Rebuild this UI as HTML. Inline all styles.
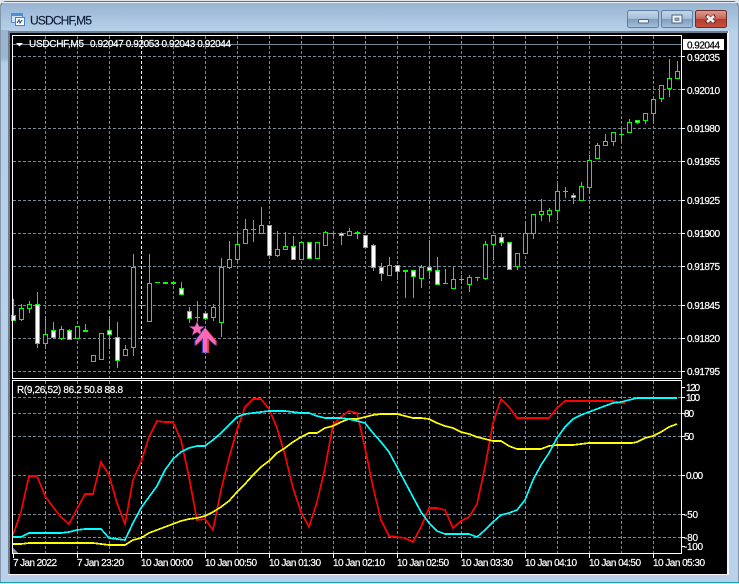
<!DOCTYPE html>
<html><head><meta charset="utf-8"><title>USDCHF,M5</title>
<style>
html,body{margin:0;padding:0;width:739px;height:584px;overflow:hidden;background:#dfe6ee}
svg{display:block;position:absolute;left:0;top:0}
text{font-family:"Liberation Sans",sans-serif;font-size:10px;fill:#fff;stroke:#fff;stroke-width:.2px}
.c{shape-rendering:crispEdges}
</style></head><body>
<svg width="739" height="584" viewBox="0 0 739 584" xmlns="http://www.w3.org/2000/svg">
<defs>
<linearGradient id="tb" x1="0" y1="0" x2="0" y2="1"><stop offset="0" stop-color="#9bb6d3"/><stop offset=".05" stop-color="#9bb6d3"/><stop offset=".06" stop-color="#b6cfe9"/><stop offset="1" stop-color="#b9d1ea"/></linearGradient>
<linearGradient id="tt" x1="0" y1="0" x2="0" y2="1"><stop offset="0" stop-color="#98b3d1"/><stop offset="1" stop-color="#b8d0ea"/></linearGradient>
<linearGradient id="bt" x1="0" y1="0" x2="0" y2="1"><stop offset="0" stop-color="#c6d6e8"/><stop offset=".48" stop-color="#a9c0da"/><stop offset=".5" stop-color="#7f9cbd"/><stop offset="1" stop-color="#a6c0dc"/></linearGradient>
<linearGradient id="cl" x1="0" y1="0" x2="0" y2="1"><stop offset="0" stop-color="#dd9c8e"/><stop offset=".48" stop-color="#c8675a"/><stop offset=".5" stop-color="#b53a2c"/><stop offset="1" stop-color="#c6533f"/></linearGradient>
</defs>
<!-- window frame -->
<rect x="0" y="1" width="739" height="583" rx="6" fill="#5f7080"/>
<rect x="1" y="2" width="737" height="581" rx="5" fill="#b7cfe9"/>
<rect x="1" y="2" width="737" height="29" rx="5" fill="url(#tt)"/>
<rect x="1" y="2" width="737" height="1" fill="#e7edf3"/>
<rect x="0" y="582" width="739" height="1" fill="#1c9fb0"/>
<rect x="0" y="583" width="739" height="1" fill="#cfe0ee"/>
<rect x="1" y="30" width="8" height="552" fill="url(#tb)"/>
<rect x="729" y="30" width="9" height="552" fill="#b9d1ea"/>
<rect x="0" y="5" width="1" height="577" fill="#8497aa"/>
<rect x="738" y="5" width="1" height="577" fill="#8497aa"/>
<!-- client edge -->
<rect x="8" y="31" width="721" height="544" fill="#f4f7fa"/>
<rect x="8" y="31" width="720" height="2" fill="#6d7f91"/>
<rect x="8" y="31" width="2" height="543" fill="#6d7f91"/>
<rect x="10" y="33" width="717" height="541" fill="#000"/>
<!-- title icon -->
<g class="c">
<rect x="11.5" y="13.5" width="11" height="9" fill="#cfe2f6" stroke="#4f8fd6"/>
<rect x="11" y="13" width="12" height="3" fill="#4f8fd6"/>
<rect x="15.5" y="17.5" width="9" height="8" fill="#fff" stroke="#3f83cf"/>
<path d="M17 23l2-3 1 3 2-3" fill="none" stroke="#2a5d9c"/>
</g>
<text x="30" y="24.5" textLength="62" style="font-size:12px;fill:#0b1c33;stroke:#0b1c33;stroke-width:.15px">USDCHF,M5</text>
<!-- buttons -->
<rect x="627.5" y="10.5" width="31" height="17" rx="2" fill="url(#bt)" stroke="#5d7c9e"/>
<rect x="638.5" y="19.5" width="10" height="3.5" rx="1" fill="#eef3f8" stroke="#4f657c"/>
<rect x="661.5" y="10.5" width="31" height="17" rx="2" fill="url(#bt)" stroke="#5d7c9e"/>
<rect x="672" y="15" width="10" height="8" fill="#eef3f8" stroke="#4f657c"/>
<rect x="675" y="18" width="4" height="2.5" fill="#8ea6c0" stroke="#4f657c" stroke-width=".6"/>
<rect x="695.5" y="10.5" width="31" height="17" rx="2" fill="url(#cl)" stroke="#6d2a26"/>
<path d="M706 15.5l4.5 3 4.5-3M706 22.5l4.5-3 4.5 3M707 16l7 6M714 16l-7 6" stroke="#4a2a28" stroke-width="3.4" fill="none"/>
<path d="M707 16l7 6M714 16l-7 6" stroke="#f3f3f3" stroke-width="2.6" fill="none"/>
<g class="c">
<!-- price line -->
<path d="M13 44.5H681" stroke="#778899"/>
<!-- grid horizontal -->
<path d="M13 56.5H681M13 89.5H681M13 128.5H681M13 161.5H681M13 200.5H681M13 233.5H681M13 266.5H681M13 305.5H681M13 338.5H681M13 371.5H681M13 397.5H681M13 413.5H681M13 436.5H681M13 475.5H681M13 514.5H681M13 537.5H681" stroke="#778899" stroke-dasharray="3 2" fill="none"/>
<!-- grid vertical main -->
<path d="M45.500 36V378M77.500 36V378M109.500 36V378M173.500 36V378M205.500 36V378M237.500 36V378M269.500 36V378M301.500 36V378M333.500 36V378M365.500 36V378M397.500 36V378M429.500 36V378M461.500 36V378M493.500 36V378M525.500 36V378M557.500 36V378M589.500 36V378M621.500 36V378M653.500 36V378M45.500 381V553M77.500 381V553M109.500 381V553M173.500 381V553M205.500 381V553M237.500 381V553M269.500 381V553M301.500 381V553M333.500 381V553M365.500 381V553M397.500 381V553M429.500 381V553M461.500 381V553M493.500 381V553M525.500 381V553M557.500 381V553M589.500 381V553M621.500 381V553M653.500 381V553" stroke="#778899" stroke-dasharray="3 2" fill="none"/>
<path d="M141.500 36V378M141.500 381V553" stroke="#fff" stroke-dasharray="3 2" fill="none"/>
<!-- wicks -->
<path fill="none" stroke="#0f0" d="M13.5 299V321M21.5 304V321M29.5 301V313M37.5 292V348M45.5 317V349M53.5 322V339M61.5 326V340M69.5 329V340M85.5 324V331M109.5 316V349M117.5 322V368M125.5 345V355M133.5 254V356M149.5 254V321M173.5 281V285M181.5 282V294M189.5 307V323M197.5 301V322M205.5 312V320M213.5 304V321M221.5 258V337M229.5 241V269M237.5 233V262M245.5 219V243M253.5 220V242M261.5 207V233M277.5 231V257M285.5 232V249M293.5 236V259M325.5 231V245M333.5 231V236M341.5 232V245M349.5 228V235M357.5 231V239M365.5 235V248M373.5 244V271M381.5 263V281M389.5 257V275M397.5 265V280M405.5 270V298M413.5 270V298M421.5 265V288M429.5 240V279M437.5 257V284M445.5 269V284M453.5 267V288M461.5 275V284M469.5 275V292M477.5 277V281M485.5 241V280M493.5 235V260M501.5 233V246M517.5 253V270M525.5 222V253M533.5 214V239M541.5 199V221M549.5 208V222M557.5 183V220M565.5 187V198M573.5 193V204M581.5 182V200M589.5 155V193M597.5 143V158M605.5 134V145M613.5 132V146M621.5 128V141M629.5 119V132M637.5 120V124M645.5 113V124M653.5 98V123M661.5 85V102M669.5 59V97M677.5 61V78"/>
<!-- doji -->
<path fill="none" stroke="#0f0" d="M83 330.5h5M83 331.5h5M139 305.5h5M155 282.5h5M163 282.5h5M163 283.5h5M171 282.5h5M171 283.5h5M195 317.5h5M251 229.5h5M331 233.5h5M355 232.5h5M355 233.5h5M403 270.5h5M403 271.5h5M443 283.5h5M459 279.5h5M475 277.5h5M563 191.5h5M619 134.5h5"/>
<!-- empty bodies -->
<path fill="#000" stroke="#0f0" d="M19.5 308.5h4v11h-4zM27.5 304.5h4v4h-4zM43.5 334.5h4v9h-4zM59.5 329.5h4v9h-4zM75.5 326.5h4v12h-4zM91.5 355.5h4v6h-4zM99.5 333.5h4v26h-4zM123.5 349.5h4v6h-4zM131.5 267.5h4v80h-4zM147.5 283.5h4v38h-4zM211.5 307.5h4v10h-4zM219.5 267.5h4v55h-4zM227.5 259.5h4v8h-4zM235.5 244.5h4v15h-4zM243.5 229.5h4v14h-4zM259.5 225.5h4v8h-4zM275.5 249.5h4v6h-4zM283.5 246.5h4v3h-4zM299.5 242.5h4v17h-4zM315.5 242.5h4v16h-4zM323.5 232.5h4v13h-4zM347.5 231.5h4v4h-4zM387.5 265.5h4v10h-4zM419.5 267.5h4v11h-4zM451.5 279.5h4v9h-4zM467.5 277.5h4v7h-4zM483.5 244.5h4v34h-4zM491.5 235.5h4v9h-4zM515.5 253.5h4v13h-4zM523.5 233.5h4v20h-4zM531.5 214.5h4v19h-4zM539.5 211.5h4v3h-4zM547.5 210.5h4v4h-4zM555.5 191.5h4v19h-4zM579.5 186.5h4v14h-4zM587.5 160.5h4v27h-4zM595.5 145.5h4v13h-4zM603.5 141.5h4v4h-4zM611.5 132.5h4v9h-4zM627.5 122.5h4v10h-4zM643.5 113.5h4v7h-4zM651.5 99.5h4v14h-4zM659.5 85.5h4v13h-4zM667.5 78.5h4v10h-4zM675.5 71.5h4v7h-4z"/>
<!-- white bodies -->
<path fill="#fff" stroke="#0f0" d="M11.5 315.5h4v5h-4zM35.5 304.5h4v39h-4zM51.5 330.5h4v7h-4zM67.5 330.5h4v9h-4zM107.5 330.5h4v4h-4zM115.5 337.5h4v23h-4zM179.5 288.5h4v6h-4zM187.5 311.5h4v7h-4zM203.5 313.5h4v5h-4zM267.5 225.5h4v30h-4zM291.5 246.5h4v13h-4zM307.5 242.5h4v16h-4zM339.5 233.5h4v2h-4zM363.5 235.5h4v12h-4zM371.5 245.5h4v22h-4zM379.5 267.5h4v6h-4zM395.5 265.5h4v6h-4zM411.5 270.5h4v6h-4zM427.5 267.5h4v3h-4zM435.5 270.5h4v14h-4zM499.5 237.5h4v5h-4zM507.5 242.5h4v27h-4zM571.5 195.5h4v2h-4zM635.5 120.5h4v2h-4z"/>
<!-- indicator lines -->
<polyline fill="none" stroke="#f00" stroke-width="1.7" points="13,535 21,512 29,476 37,476 45,496 53,507 61,517 69,524 77,509 85,494 93,494 101,462 109,475 117,503 125,524 133,480 141,462 149,437 157,421 165,422 173,422 181,440 189,477 197,520 205,519 213,530 221,490 229,458 237,430 245,407 253,399 261,399 269,409 277,428 285,455 293,488 301,512 309,527 317,502 325,468 333,425 341,417 349,411 357,413 365,448 373,487 381,520 389,536 397,537 405,538 413,542 421,527 429,508 437,508 445,510 453,528 461,521 469,517 477,504 485,467 493,423 501,399 509,407 517,418 549,418 557,408 565,401 613,401 621,403 625,403"/>
<polyline fill="none" stroke="#ff0" stroke-width="1.7" points="13,544 21,544 29,543 93,543 101,544 109,545 125,545 133,540 141,538 149,533 157,530 165,527 173,524 181,521 189,519 197,518 205,516 213,512 221,507 229,501 237,492 245,484 253,475 261,467 269,461 277,453 285,448 293,442 301,437 309,433 317,433 325,428 333,426 341,422 349,419 357,419 365,417 373,415 381,414 389,414 397,414 405,416 413,418 421,418 429,419 437,423 445,426 453,428 461,432 469,434 477,437 485,439 493,441 501,441 509,446 517,449 541,449 549,446 557,445 573,445 581,444 589,443 597,443 632,443 637,442 645,438 653,436 661,432 669,427 677,424"/>
<polyline fill="none" stroke="#0ff" stroke-width="1.7" points="13,537 21,537 29,533 61,533 69,532 77,530 85,529 101,529 109,538 117,539 125,540 133,523 141,508 149,497 157,486 165,470 173,459 181,452 189,448 197,446 205,446 213,440 221,433 229,425 237,417 245,414 253,413 261,412 269,411 285,411 293,412 301,413 309,413 317,416 325,418 341,418 349,419 357,421 365,423 373,433 381,442 389,452 397,467 405,482 413,497 421,512 429,523 437,531 445,534 469,534 477,537 485,530 493,522 501,515 509,513 517,510 525,500 533,480 541,465 549,453 557,438 565,427 573,419 581,415 589,412 597,409 605,406 613,403 621,402 629,400 637,398 677,398"/>
<!-- frames -->
<path d="M12.5 378V35.5H681.5V378M12 378.5H682M12 380.5H682M12.5 380V553.5H681.5V380" fill="none" stroke="#fff"/>
<!-- axis ticks -->
<path d="M682 56.5h3M682 89.5h3M682 128.5h3M682 161.5h3M682 200.5h3M682 233.5h3M682 266.5h3M682 305.5h3M682 338.5h3M682 371.5h3M682 387.5h3M682 397.5h3M682 413.5h3M682 436.5h3M682 475.5h3M682 514.5h3M682 537.5h3M682 546.5h3M13.5 554v4M77.5 554v4M141.5 554v4M205.5 554v4M269.5 554v4M333.5 554v4M397.5 554v4M461.5 554v4M525.5 554v4M589.5 554v4M653.5 554v4" stroke="#fff" fill="none"/>
<path d="M13 548l5 5h-5z" fill="#8a9099"/>
<rect x="683" y="39" width="41" height="11" fill="#fff"/>
</g>
<!-- star and arrow -->
<path d="M197 321.500l2 5h5.500l-4.300 3.300 1.600 5.400-4.800-3.100-4.800 3.100 1.600-5.400-4.300-3.300h5.500z" fill="#ff69b4" stroke="#7a3a9c" stroke-width=".5"/>
<path d="M205 328L216 341V346L208.500 339V353H202.500V339L195 346V341Z" fill="#d04040" transform="translate(.7 0)"/>
<path d="M205 328L216 341V346L208.500 339V353H202.500V339L195 346V341Z" fill="#3a3fc0" transform="translate(-.7 0)"/>
<path d="M205 328L215.500 341V345L207.500 338V352.500H203V338L195.500 345V341Z" fill="#ff69b4"/>
<!-- top-left info -->
<path d="M16 43h7l-3.500 3.500z" fill="#fff"/>
<text x="29" y="47" textLength="55">USDCHF,M5</text>
<text x="90" y="47" textLength="141">0.92047 0.92053 0.92043 0.92044</text>
<text x="17" y="393" textLength="106">R(9,26,52) 86.2 50.8 88.8</text>
<!-- price labels -->
<text x="687" y="48.500" textLength="33" style="fill:#000;stroke:#000">0.92044</text>
<text x="687" y="61" textLength="33">0.92035</text>
<text x="687" y="94" textLength="33">0.92010</text>
<text x="687" y="132" textLength="33">0.91980</text>
<text x="687" y="165" textLength="33">0.91955</text>
<text x="687" y="204" textLength="33">0.91925</text>
<text x="687" y="237" textLength="33">0.91900</text>
<text x="687" y="270" textLength="33">0.91875</text>
<text x="687" y="309" textLength="33">0.91845</text>
<text x="687" y="342" textLength="33">0.91820</text>
<text x="687" y="375" textLength="33">0.91795</text>
<!-- indicator labels -->
<text x="686" y="391" textLength="14">120</text>
<text x="686" y="401" textLength="14">100</text>
<text x="684" y="417" textLength="10">80</text>
<text x="684" y="440" textLength="10">50</text>
<text x="686" y="479" textLength="17">0.00</text>
<text x="684" y="518" textLength="14">-50</text>
<text x="684" y="541" textLength="14">-80</text>
<text x="684" y="550" textLength="19">-100</text>
<!-- time labels -->
<text x="13" y="566" textLength="44">7 Jan 2022</text>
<text x="77" y="566" textLength="47">7 Jan 23:20</text>
<text x="141" y="566" textLength="52">10 Jan 00:00</text>
<text x="205" y="566" textLength="52">10 Jan 00:50</text>
<text x="269" y="566" textLength="52">10 Jan 01:30</text>
<text x="333" y="566" textLength="52">10 Jan 02:10</text>
<text x="397" y="566" textLength="52">10 Jan 02:50</text>
<text x="461" y="566" textLength="52">10 Jan 03:30</text>
<text x="525" y="566" textLength="52">10 Jan 04:10</text>
<text x="589" y="566" textLength="52">10 Jan 04:50</text>
<text x="653" y="566" textLength="52">10 Jan 05:30</text>
</svg>
</body></html>
